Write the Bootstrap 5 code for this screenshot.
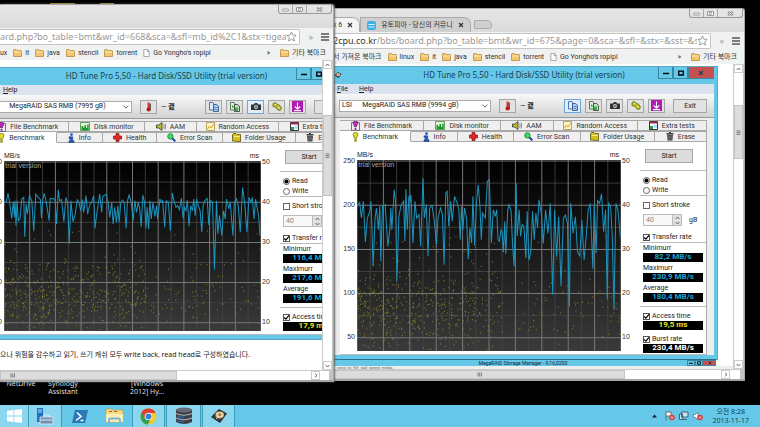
<!DOCTYPE html>
<html lang="ko">
<head>
<meta charset="utf-8">
<meta name="viewport" content="width=device-width, initial-scale=1">
<title>HD Tune Pro</title>
<link href="https://cdn.jsdelivr.net/npm/bootstrap@5.3.0/dist/css/bootstrap.min.css" rel="stylesheet">
<style>
:root{--sky:#66c8e8;--ui:Roboto,"Noto Sans CJK KR",sans-serif;--wide:"Noto Sans","Noto Sans CJK KR",sans-serif}
body{background:#000;color:#222;font:7px/10px var(--ui);height:100vh;overflow:hidden}
button,input,select{font:inherit;color:inherit;padding:0;border:0;background:none;border-radius:0}
svg{display:block;flex:none}
.desk{min-height:0;overflow:hidden}
.browser{position:absolute;display:flex;flex-direction:column;background:linear-gradient(#e6e6e6,#dadada 24px,#c4c4c4 80px);border:solid #a6a6a6;border-width:1px 1px 2px 0;border-radius:0 3px 0 0}
.b-left{left:0;right:calc(100% - 334px);top:4px;bottom:23px;z-index:2;box-shadow:1px 0 2px #666}
.b-right{left:326px;right:15px;top:8px;bottom:24px;padding-left:7px}
.capt{height:23px}
.winbtns{height:9px;border:1px solid #999;border-top:0;border-radius:0 0 3px 3px;margin-right:1px}
.winbtns button{width:14px;border-right:1px solid #aaa;display:flex;align-items:center;justify-content:center}
.winbtns button:last-child{width:24px;border:0}
.wtab{height:15px;margin-top:8px;padding:0 6px;border:1px solid #aaa;border-bottom:0;border-radius:0 7px 0 0;background:#cfcfcf;color:#333;gap:5px}
.wtab.on{background:#f3f4f4}
.wtab.blank{width:18px;height:9px;margin:11px 0 0 3px;border:1px solid #aaa;border-radius:1px 5px 3px 1px}
.urlrow{height:17px;background:#f0f1f1;padding-right:4px;font:9px/14px var(--wide);color:#999}
.urlbox{height:16px;background:#fff;border:1px solid #c4c4c4;border-left:0;border-radius:0 2px 2px 0;padding-right:2px}
.urlbox input{min-width:0;flex:1;height:13px;outline:0}
.urlbox label{color:#333}
.marks{height:15px;background:#f0f1f1;gap:6px;padding-right:7px;white-space:nowrap}
.marks a{color:#333;text-decoration:none;display:flex;align-items:center;gap:3px}
.page{flex:1;min-height:0;background:#fff;margin-right:1px}
.view{overflow:hidden;min-width:0;flex:1;display:flex;flex-direction:column}
.vbar{width:10px;flex:none;border-left:1px solid #ccc;display:flex;flex-direction:column;background:#fff}
.bbtn{width:9px;height:9px;flex:none;display:flex;align-items:center;justify-content:center;border:1px solid #ccc}
.thumb{background:#dcdcdc;border:1px solid #c4c4c4;display:flex;align-items:center;justify-content:center}
.hbar{height:10px;flex:none;border-top:1px solid #ccc;display:flex;background:#fff}
.hd{flex:none;border:solid var(--sky);border-width:0 3px 4px;background:#ededed;box-shadow:0 0 0 1px #5aa9c4}
.hd-l{width:377px;margin:8px 0 0 -22px}
.hd-r{width:386px;margin:3px 0 0 -2px}
.hdtitle{height:17px;background:var(--sky);font:8px/16px var(--wide);color:#17434f}
.hdtitle>div{padding-left:48px}
.wbtn{height:12px;width:15px;border:1px solid #3b87a0!important;border-top:0!important;display:flex;align-items:center;justify-content:center}
.wbtn.x{width:26px;background:#c75050}
.hdmenu{height:10px;background:#dde3ee;gap:11px;padding-left:3px}
.hd-l .hdmenu{padding-left:22px}
.tools{height:24px;background:linear-gradient(#f8f8f8,#d2d2d2);border-bottom:1px solid #999;padding:0 7px 0 5px}
.hd-l .tools{padding-right:4px}
.tools select.form-select{width:152px;height:12px;padding:0 12px 0 2px;border:1px solid #aaa;border-radius:0;font:7px/9px var(--ui);background-color:#fff;background-size:6px;background-position:right 2px center;color:#222}
.hd-l .tools select.form-select{width:146px}
.tb{width:17px;height:14px;border:1px solid #a6a6a6!important;background:#e2e2e2!important;display:flex;align-items:center;justify-content:center;flex:none}
.tb.hot{border-color:#6fa6d8!important;background:#dfeefa!important}
.tb.exit{width:34px}
.tabs{padding:2px 0 0;height:24px}
.tabs>div{height:11px;display:flex}
.tabs button{flex:1 1 0;min-width:0;background:#efefef;border:1px solid #a8a8a8;border-left-width:0;display:flex;align-items:center;justify-content:center;gap:4px;white-space:nowrap;color:#333}
.tabs button.on{background:#fff;border-bottom-color:#fff;border-top-color:#fff}
.w84{flex-grow:84!important}.w77{flex-grow:77!important}.w52{flex-grow:52!important}.w69{flex-grow:69!important}.w71{flex-grow:71!important}.w47{flex-grow:47!important}.w55{flex-grow:55!important}.w67{flex-grow:67!important}.w74{flex-grow:74!important}
.hd-l .body2{margin:0 5px 0 6px}.hd-r .body2{margin:0 7px 0 6px}
.sheet{background:#fff;border-right:1px solid #aaa;border-bottom:1px solid #bbb}
.hd-l .sheet{padding-bottom:2px}
.axis{width:17px;margin-top:14px;font:7px/10px "Liberation Sans",sans-serif;display:flex;flex-direction:column;color:#333}
.axis.lft{padding-right:2px;text-align:right}
.axis.rgt{padding-left:1px}
.axis span{height:var(--st);flex:none}
.hd-l{--st:40px}.hd-r{--st:44px}
.hd-l .plot{height:170px}.hd-r .plot{height:191px}
.hd-l .axis{height:170px}.hd-r .axis{height:191px}
.chart{flex:1;min-width:0}
.units{height:10px;margin-top:8px;padding-right:2px;line-height:10px;font-family:"Liberation Sans",sans-serif}
.plot{width:100%;background:linear-gradient(#000,#1b1b1b 50%,#3a3a3a)}
.panel{width:66px;flex:none;padding:7px 0 0;margin-left:2px}
.panel hr{margin:0;opacity:1;border-top:1px solid #bbb;height:0}
.start{margin:0 0 7px 5px;width:48px;height:14px;background:#dcdcdc!important;border:1px solid #a8a8a8!important;display:block}
.row10{height:10px;display:flex;align-items:center;gap:2px;margin-left:3px;white-space:nowrap}
.row10.size{gap:7px;margin-top:5px;margin-bottom:7px}
.form-check-input{width:7px;height:7px;margin:0;border:1px solid #666;flex:none;float:none;background-size:7px 7px!important;box-shadow:none}
.form-check-input[type=checkbox]{border-radius:0}
.form-check-input:checked{background-color:#fff;border-color:#555}
.form-check-input:checked[type=checkbox]{background-image:url("data:image/svg+xml,%3csvg xmlns='http://www.w3.org/2000/svg' viewBox='0 0 7 7'%3e%3cpath d='M1 3.3 2.9 5.2 6 1.4' fill='none' stroke='%23000' stroke-width='1.2'/%3e%3c/svg%3e")}
.form-check-input:checked[type=radio]{background-image:url("data:image/svg+xml,%3csvg xmlns='http://www.w3.org/2000/svg' viewBox='0 0 7 7'%3e%3ccircle cx='3.5' cy='3.5' r='2' fill='%23000'/%3e%3c/svg%3e")}
.spin{width:39px;height:12px;border:1px solid #bbb;background:#f8f8f8;color:#888;flex:none}
.spin input{width:28px;height:10px;padding-left:2px;line-height:10px;color:#888}
.spin i{width:9px;border-left:1px solid #bbb;background:#e0e0e0;display:flex;flex-direction:column;align-items:center;justify-content:space-around}
.led{height:9px;margin:0 3px 1px;background:#000;color:#19a6dc;font:bold 8px/8px Roboto,sans-serif;text-align:center;overflow:hidden;white-space:nowrap;width:60px}
.led.lime{color:#e8e428}
.post{font:7px/12px "Noto Sans","Noto Sans CJK KR",sans-serif;margin:10px 0 0;white-space:nowrap;color:#222}
.mini{height:7px;background:var(--sky);border-top:1px solid #2a6f88;font:5px/6px var(--ui);color:#123;width:383px;padding-left:26px}
.mini button{width:8px;border:1px solid #3b87a0;display:flex;align-items:center;justify-content:center}
.mini button.x{width:13px;background:#c75050}
.tiny{height:4px;font:4px/4px var(--ui);color:#666;background:#eee;overflow:hidden}
.shortcuts{position:absolute;left:0;bottom:9px;color:#ddd;font:7px/8px var(--wide);text-align:center}
.shortcuts span{width:42px}
.glint{position:absolute;left:50px;top:3px;width:64px;height:1px;background:linear-gradient(90deg,#a09428 25px,#000 25px 50px,#a09428 50px)}
.taskbar{height:22px;background:var(--sky);flex:none}
.taskbar button.app{height:22px;width:35px;display:flex;align-items:center;justify-content:center}
.taskbar button.app.s{width:33px}
.taskbar button.run{background:#8bd6ef;border:solid #3c9dbd;border-width:0 1px}
.taskbar button.stack{margin:0 1px}
.clock{font:7px/9px var(--wide);color:#123f4d;text-align:center;padding:0 11px 0 5px}
</style>
<script src="https://cdn.jsdelivr.net/npm/bootstrap@5.3.0/dist/js/bootstrap.bundle.min.js"></script>
</head>
<body class="d-flex flex-column">
<svg width="0" height="0" class="position-absolute" aria-hidden="true">
<symbol id="folder" viewBox="0 0 9 8"><path d="M.5 7.5V1.2q0-.7.7-.7h2l1 1h3.600q.7 0 .7.7v5.300z" fill="#f2c66c" stroke="#b98a3c" stroke-width=".8"/><path d="M1 3h7" stroke="#fff0c0" stroke-width=".8"/></symbol>
<symbol id="doc" viewBox="0 0 7 9"><path d="M.5.5h4L6.500 3v5.500h-6zM4.500.5V3h2" fill="#fff" stroke="#888" stroke-width=".8"/></symbol>
<symbol id="star" viewBox="0 0 12 12"><path d="M6 1l1.500 3.400 3.600.4-2.700 2.500.8 3.600L6 9.100l-3.200 1.800.8-3.600L.9 4.800l3.600-.4z" fill="#fff" stroke="#888" stroke-width=".9"/></symbol>
<symbol id="burger" viewBox="0 0 8 8"><path d="M0 1h8M0 4h8M0 7h8" stroke="#555" stroke-width="1.700"/></symbol>
<symbol id="min" viewBox="0 0 7 5"><rect x=".5" y="2" width="6" height="2" rx=".6" fill="#fff" stroke="#777" stroke-width=".7"/></symbol>
<symbol id="max" viewBox="0 0 7 5"><rect x=".5" y=".4" width="6" height="4.200" rx=".6" fill="#fff" stroke="#777" stroke-width=".8"/><rect x="2.500" y="1.700" width="2" height="1.500" fill="none" stroke="#777" stroke-width=".6"/></symbol>
<symbol id="cls" viewBox="0 0 7 5"><path d="M1 .5l5 4M6 .5l-5 4" stroke="#777" stroke-width="1.800"/><path d="M1 .5l5 4M6 .5l-5 4" stroke="#fff" stroke-width=".7"/></symbol>
<symbol id="up" viewBox="0 0 5 4"><path d="M.7 3 2.500 1l1.800 2" fill="none" stroke="#555" stroke-width=".9"/></symbol>
<symbol id="dn" viewBox="0 0 5 4"><path d="M.7 1l1.800 2L4.300 1" fill="none" stroke="#555" stroke-width=".9"/></symbol>
<symbol id="rt" viewBox="0 0 4 5"><path d="M1 .7l2 1.800L1 4.300" fill="none" stroke="#555" stroke-width=".9"/></symbol>
<symbol id="grip" viewBox="0 0 5 5"><path d="M.5 1h4M.5 2.700h4M.5 4.400h4" stroke="#666" stroke-width=".8"/></symbol>
<symbol id="gripv" viewBox="0 0 5 5"><path d="M1 .5v4M2.700.5v4M4.400.5v4" stroke="#666" stroke-width=".8"/></symbol>
<symbol id="x" viewBox="0 0 6 6"><path d="M1 1l4 4M5 1L1 5" stroke="currentColor" stroke-width="1.200"/></symbol>
<symbol id="wmin" viewBox="0 0 6 6"><path d="M0 3.500h6" stroke="#000" stroke-width="1.500"/></symbol>
<symbol id="wmax" viewBox="0 0 6 6"><path d="M.7 1.200h4.600v3.800H.7z" fill="none" stroke="#000" stroke-width="1.300"/></symbol>
<symbol id="thermo" viewBox="0 0 8 10"><path d="M5 1.500v7" stroke="#333" stroke-width="1.500"/><path d="M3.500.5v6" stroke="#e03028" stroke-width="2"/><circle cx="3.500" cy="7.600" r="2" fill="#c01818"/></symbol>
<symbol id="copy" viewBox="0 0 10 10"><path d="M.5.5H4L5 2v6H.5z" fill="#dcecff" stroke="#37598c" stroke-width=".8"/><path d="M4.500 2.500h3l2 1.800v5.200h-5z" fill="#a8cdf5" stroke="#284a80" stroke-width=".8"/><path d="M5.500 5.500h3M5.500 7.500h3" stroke="#37598c" stroke-width=".6"/></symbol>
<symbol id="copy2" viewBox="0 0 10 10"><path d="M.5.5H4L5 2v6H.5z" fill="#e0f0e0" stroke="#37603c" stroke-width=".8"/><path d="M4.500 2.500h3l2 1.800v5.200h-5z" fill="#c8dcc8" stroke="#333" stroke-width=".8"/><path d="M2 3v3l3-1v4h3V5.500H5" fill="#37b045"/></symbol>
<symbol id="cam" viewBox="0 0 10 9"><path d="M0 2.500h3l.7-1.500h2.600L7 2.500h3V8H0z" fill="#333"/><circle cx="5" cy="5" r="1.900" fill="#ddd"/><circle cx="5" cy="5" r="1" fill="#555"/></symbol>
<symbol id="gear" viewBox="0 0 10 9"><path d="M1 1.500 3.500.5l1.700 1.700 2.300.9L9.500 6 8.200 8.500 5.500 7.800 4 5.500 1 4.500z" fill="#b8b820" stroke="#6c6c10" stroke-width=".8"/><circle cx="3.200" cy="2.800" r=".8" fill="#eee"/><circle cx="6.800" cy="5.800" r=".9" fill="#eee"/></symbol>
<symbol id="save" viewBox="0 0 11 11"><path d="M0 0h11v11H0z" fill="#b01cb4"/><path d="M5.500 1.500V8M2.800 5.500l2.700 2.700 2.700-2.700M2 9.600h7" fill="none" stroke="#fff" stroke-width="1.100"/></symbol>
<symbol id="fileb" viewBox="0 0 9 10"><path d="M.5 1.500h8v8h-8z" fill="#eee" stroke="#555" stroke-width=".8"/><path d="M4.500 0q2.500 0 2.300 2.300L5.200 6H3.800L2.200 2.300Q2 0 4.500 0z" fill="#c02cc0" stroke="#501050" stroke-width=".6"/><circle cx="4.500" cy="8" r="1.100" fill="#a018a0"/></symbol>
<symbol id="bench" viewBox="0 0 7 10"><path d="M3.500.4q2.600 0 2.400 2.300L4.300 6.500H2.700L1.100 2.700Q.9.400 3.500.4z" fill="#e6de28" stroke="#66600c" stroke-width=".7"/><circle cx="3.500" cy="8.400" r="1.200" fill="#c8bc10" stroke="#66600c" stroke-width=".5"/></symbol>
<symbol id="bars" viewBox="0 0 10 9"><path d="M.5.5h9v8h-9z" fill="#e8f6d8" stroke="#484" stroke-width=".8"/><path d="M1.500 8V4H3v1.500h1.500V3H6v3h1.200V2.500h1.500V8z" fill="#149a28"/></symbol>
<symbol id="spk" viewBox="0 0 10 9"><path d="M.5 3h2.300L6 .5v8L2.800 6H.5z" fill="#c4b81c" stroke="#333" stroke-width=".8"/><path d="M7.500 2.500q1.500 2 0 4M9 1.500q1.500 3 0 6" fill="none" stroke="#555" stroke-width=".7"/></symbol>
<symbol id="rand" viewBox="0 0 9 9"><path d="M.5.500h8v8h-8z" fill="#fdf4c8" stroke="#a89040" stroke-width=".8"/><path d="M1.500 7l2-3 1.500 2 3-4" fill="none" stroke="#d8a020"/></symbol>
<symbol id="extra" viewBox="0 0 9 9"><path d="M.5.500h8v8h-8z" fill="#fff" stroke="#333"/><path d="M.5.500h8v2h-8z" fill="#9c2a4c"/><path d="M1 5h3v3H1z" fill="#29a03c"/><path d="M4.500 3.500h3.500v3.500h-3.500z" fill="#b8dcff"/></symbol>
<symbol id="info" viewBox="0 0 7 10"><circle cx="3.500" cy="1.600" r="1.400" fill="#2060c8"/><path d="M1 3.800h3.700v4H6v1.700H1V7.800h1.200V5.500H1z" fill="#1c5cc4" stroke="#0c2c68" stroke-width=".5"/></symbol>
<symbol id="health" viewBox="0 0 9 9"><path d="M3 .5h3V3h2.500v3H6v2.500H3V6H.5V3H3z" fill="#e02828" stroke="#801010" stroke-width=".7"/></symbol>
<symbol id="scan" viewBox="0 0 9 9"><path d="M5 5l3.300 3.300" stroke="#1838a8" stroke-width="1.900"/><circle cx="3.400" cy="3.400" r="2.700" fill="#40dc60" stroke="#147a30" stroke-width=".8"/></symbol>
<symbol id="usage" viewBox="0 0 9 9"><path d="M.5 8V2l1-1.500h2.500l1 1h3.500V8.500z" fill="#d8c020" stroke="#5c500c" stroke-width=".8"/><path d="M2 3.500h6" stroke="#fff6a0" stroke-width=".8"/></symbol>
<symbol id="trash" viewBox="0 0 8 9"><path d="M1 2.500h6L6.400 8.600H1.600z" fill="#444"/><path d="M.4 1.700h7.200M3 .6h2" stroke="#222"/><path d="M3 3.500v4M5 3.500v4" stroke="#aaa" stroke-width=".6"/></symbol>
<symbol id="disk" viewBox="0 0 18 16"><path d="M1 9 9 1l8 4.500L10 15z" fill="#2c2c2c"/><path d="M3 9 9 2.500l6.500 3.500L10 13z" fill="#4a4440"/><ellipse cx="9.700" cy="6.800" rx="4.200" ry="3.400" fill="#e8c898"/><circle cx="9.700" cy="6.800" r="1.200" fill="#8c6840"/><path d="M6 11l3-3" stroke="#ddd"/></symbol>
</svg>

<main class="desk position-relative flex-grow-1">
<div class="glint"></div>
<div class="shortcuts d-flex"><span>NetDrive</span><span>Synology<br>Assistant</span><span></span><span>[Windows<br>2012] Hy...</span></div>

<section class="browser b-right" aria-label="2cpu.co.kr">
 <div class="capt d-flex">
  <button class="wtab on d-flex align-items-center border-start-0 ps-0">x 6 <svg width="6" height="6"><use href="#x"/></svg></button>
  <button class="wtab d-flex align-items-center"><svg width="9" height="9" viewBox="0 0 9 9"><rect width="9" height="9" rx="2" fill="#3ab0e6"/><path d="M1.500 3.500h6M1.500 6h6" stroke="#d8f2ff"/></svg>유토피아 - 당신의 커뮤니 <svg width="6" height="6"><use href="#x"/></svg></button>
  <button class="wtab blank" aria-label="새 탭"></button>
  <div class="winbtns d-flex ms-auto"><button aria-label="최소화"><svg width="7" height="5"><use href="#min"/></svg></button><button aria-label="최대화"><svg width="7" height="5"><use href="#max"/></svg></button><button aria-label="닫기"><svg width="7" height="5"><use href="#cls"/></svg></button></div>
 </div>
 <div class="urlrow d-flex align-items-center gap-2">
  <div class="urlbox d-flex align-items-center flex-grow-1"><label for="url2">2cpu.co.kr</label><input id="url2" value="/bbs/board.php?bo_table=bmt&amp;wr_id=675&amp;page=0&amp;sca=&amp;sfl=&amp;stx=&amp;sst=&amp;sod"><svg width="11" height="11"><use href="#star"/></svg></div>
  <span>»</span><svg width="8" height="8"><use href="#burger"/></svg>
 </div>
 <nav class="marks d-flex align-items-center"><a href="#">서 가져온 북마크</a><a href="#"><svg width="9" height="8"><use href="#folder"/></svg>linux</a><a href="#"><svg width="9" height="8"><use href="#folder"/></svg>it</a><a href="#"><svg width="9" height="8"><use href="#folder"/></svg>java</a><a href="#"><svg width="9" height="8"><use href="#folder"/></svg>stencil</a><a href="#"><svg width="9" height="8"><use href="#folder"/></svg>torrent</a><a href="#"><svg width="7" height="8"><use href="#doc"/></svg>Go Yongho's ropipi</a><span class="ms-auto me-1">»</span><a href="#"><svg width="9" height="8"><use href="#folder"/></svg>기타 북마크</a></nav>
 <div class="page d-flex">
  <div class="view">
   <div class="hd hd-r">
    <div class="hdtitle d-flex"><svg width="8" height="8" class="mt-1"><use href="#disk"/></svg><div class="flex-grow-1 text-center">HD Tune Pro 5,50 - Hard Disk/SSD Utility (trial version)</div><button class="wbtn" aria-label="최소화"><svg width="6" height="6"><use href="#wmin"/></svg></button><button class="wbtn" aria-label="최대화"><svg width="6" height="6"><use href="#wmax"/></svg></button><button class="wbtn x" aria-label="닫기"><svg width="6" height="6"><use href="#x"/></svg></button></div>
    <div class="hdmenu d-flex"><span><u>F</u>ile</span><span><u>H</u>elp</span></div>
    <div class="tools d-flex align-items-center">
     <select class="form-select" aria-label="드라이브"><option>LSI &nbsp; &nbsp; &nbsp;MegaRAID SAS RMB (9994 gB)</option></select>
     <button class="tb ms-2" aria-label="온도"><svg width="8" height="10"><use href="#thermo"/></svg></button><span class="ms-1 text-nowrap">— <b>캜</b></span>
     <div class="d-flex ms-auto gap-1 me-2"><button class="tb hot" aria-label="복사"><svg width="10" height="10"><use href="#copy"/></svg></button><button class="tb" aria-label="그림 복사"><svg width="10" height="10"><use href="#copy2"/></svg></button><button class="tb" aria-label="화면"><svg width="10" height="9"><use href="#cam"/></svg></button><button class="tb" aria-label="옵션"><svg width="10" height="9"><use href="#gear"/></svg></button><button class="tb" aria-label="저장"><svg width="11" height="11"><use href="#save"/></svg></button></div>
     <button class="tb exit">Exit</button>
    </div>
    <div class="body2">
     <div class="tabs"><div><button class="w84"><svg width="9" height="10"><use href="#fileb"/></svg>File Benchmark</button><button class="w77"><svg width="10" height="9"><use href="#bars"/></svg>Disk monitor</button><button class="w52"><svg width="10" height="9"><use href="#spk"/></svg>AAM</button><button class="w84"><svg width="9" height="9"><use href="#rand"/></svg>Random Access</button><button class="w69"><svg width="9" height="9"><use href="#extra"/></svg>Extra tests</button></div>
     <div><button class="w71 on"><svg width="7" height="10"><use href="#bench"/></svg>Benchmark</button><button class="w47"><svg width="7" height="10"><use href="#info"/></svg>Info</button><button class="w55"><svg width="9" height="9"><use href="#health"/></svg>Health</button><button class="w67"><svg width="9" height="9"><use href="#scan"/></svg>Error Scan</button><button class="w74"><svg width="9" height="9"><use href="#usage"/></svg>Folder Usage</button><button class="w52"><svg width="8" height="9"><use href="#trash"/></svg>Erase</button></div></div>
     <div class="sheet d-flex">
      <div class="axis lft"><span>250</span><span>200</span><span>150</span><span>100</span><span>50</span></div>
      <div class="chart"><div class="units d-flex justify-content-between"><span>MB/s</span><span>ms</span></div><svg class="plot" data-seed="7" data-step="39.4 66.3" viewBox="0 0 788 573" preserveAspectRatio="none" data-wave="0,139 8,127 13,174 19,124 25,246 31,174 38,154 42,124 48,319 54,174 58,144 64,209 68,139 71,304 76,139 84,134 92,259 98,209 101,144 104,209 111,89 115,124 119,364 125,169 132,134 139,124 143,244 146,87 150,209 155,107 159,124 161,104 167,249 173,124 178,174 185,164 190,259 197,54 201,174 207,134 212,289 217,144 224,137 231,184 237,254 242,174 249,144 255,164 260,314 265,99 269,94 274,199 280,124 284,184 291,109 299,129 304,149 308,239 312,139 316,209 321,144 327,174 332,297 337,204 342,249 346,109 351,257 357,124 362,74 367,139 371,239 375,159 383,174 389,64 395,59 401,249 407,149 413,169 417,149 421,239 425,244 430,209 433,214 437,277 441,184 444,281 450,149 454,134 460,154 464,249 469,319 475,69 478,229 484,149 488,229 493,194 498,199 504,294 508,154 513,301 519,274 524,154 529,239 534,159 539,204 543,119 550,160 556,250 563,150 570,220 577,130 584,404 590,150 596,290 602,170 609,379 616,175 622,165 628,190 634,440 638,129 645,220 652,170 658,275 665,288 671,180 678,300 684,230 690,150 696,130 704,326 708,130 714,280 718,122 724,130 730,101 736,215 742,150 747,419 751,130 757,140 762,230 767,450 773,130 779,150 786,230"><text x="4" y="20" font-size="21" fill="#aaa" font-family="Liberation Sans">trial version</text></svg></div>
      <div class="axis rgt"><span>50</span><span>40</span><span>30</span><span>20</span><span>10</span></div>
      <div class="panel">
       <button class="start">Start</button><hr>
       <div class="row10 mt-1"><input class="form-check-input" type="radio" name="m2" id="r2" checked><label for="r2">Read</label></div>
       <div class="row10"><input class="form-check-input" type="radio" name="m2" id="w2"><label for="w2">Write</label></div><hr>
       <div class="row10 mt-1"><input class="form-check-input" type="checkbox" id="s2"><label for="s2">Short stroke</label></div>
       <div class="row10 size"><div class="spin d-flex"><input value="40" aria-label="크기" disabled><i><svg width="5" height="4"><use href="#up"/></svg><svg width="5" height="4"><use href="#dn"/></svg></i></div><span>gB</span></div>
       <div class="row10"><input class="form-check-input" type="checkbox" id="t2" checked><label for="t2">Transfer rate</label></div><hr>
       <div class="row10">Minimurr</div><div class="led">82,2 MB/s</div><div class="row10">Maximurr</div><div class="led">230,9 MB/s</div><div class="row10">Average</div><div class="led">180,4 MB/s</div>
       <hr class="mt-1"><div class="row10 mt-1"><input class="form-check-input" type="checkbox" id="a2" checked><label for="a2">Access time</label></div><div class="led lime">19,5 ms</div>
       <div class="row10 mt-1"><input class="form-check-input" type="checkbox" id="b2" checked><label for="b2">Burst rate</label></div><div class="led text-white">230,4 MB/s</div>
      </div>
     </div>
    </div>
   </div>
   <div class="mini d-flex flex-shrink-0"><span class="flex-grow-1 text-center">MegaRAID Storage Manager - 9,16,0200</span><button aria-label="최소화"><svg width="4" height="4"><use href="#wmin"/></svg></button><button aria-label="최대화"><svg width="4" height="4"><use href="#wmax"/></svg></button><button class="x" aria-label="닫기"><svg width="4" height="4"><use href="#x"/></svg></button></div>
   <div class="tiny ps-1">www, lsi, file, raid, speed, media</div>
  </div>
  <div class="vbar"><button class="bbtn" aria-label="위로"><svg width="5" height="4"><use href="#up"/></svg></button><div style="height:32px"></div><div class="thumb" style="height:54px"><svg width="5" height="5"><use href="#grip"/></svg></div><button class="bbtn mt-auto" aria-label="아래로"><svg width="5" height="4"><use href="#dn"/></svg></button></div>
 </div>
 <div class="hbar me-1"><div class="thumb flex-grow-1"><svg width="5" height="5"><use href="#gripv"/></svg></div><div style="width:96px"></div><button class="bbtn" aria-label="오른쪽"><svg width="4" height="5"><use href="#rt"/></svg></button><div style="width:10px"></div></div>
</section>

<section class="browser b-left" aria-label="2cpu.co.kr">
 <div class="capt d-flex justify-content-end"><div class="winbtns d-flex"><button aria-label="최소화"><svg width="7" height="5"><use href="#min"/></svg></button><button aria-label="최대화"><svg width="7" height="5"><use href="#max"/></svg></button><button aria-label="닫기"><svg width="7" height="5"><use href="#cls"/></svg></button></div></div>
 <div class="urlrow d-flex align-items-center gap-2">
  <div class="urlbox d-flex align-items-center flex-grow-1"><input aria-label="주소" value="ard.php?bo_table=bmt&amp;wr_id=668&amp;sca=&amp;sfl=mb_id%2C1&amp;stx=tigea99"><svg width="11" height="11"><use href="#star"/></svg></div>
  <span>»</span><svg width="8" height="8"><use href="#burger"/></svg>
 </div>
 <nav class="marks d-flex align-items-center"><a href="#">ux</a><a href="#"><svg width="9" height="8"><use href="#folder"/></svg>it</a><a href="#"><svg width="9" height="8"><use href="#folder"/></svg>java</a><a href="#"><svg width="9" height="8"><use href="#folder"/></svg>stencil</a><a href="#"><svg width="9" height="8"><use href="#folder"/></svg>torrent</a><a href="#"><svg width="7" height="8"><use href="#doc"/></svg>Go Yongho's ropipi</a><span class="ms-auto me-1">»</span><a href="#"><svg width="9" height="8"><use href="#folder"/></svg>기타 북마크</a></nav>
 <div class="page d-flex">
  <div class="view">
   <div class="hd hd-l">
    <div class="hdtitle d-flex"><svg width="8" height="8" class="mt-1"><use href="#disk"/></svg><div class="flex-grow-1 text-center">HD Tune Pro 5,50 - Hard Disk/SSD Utility (trial version)</div><button class="wbtn" aria-label="최소화"><svg width="6" height="6"><use href="#wmin"/></svg></button><button class="wbtn" aria-label="최대화"><svg width="6" height="6"><use href="#wmax"/></svg></button><button class="wbtn x" aria-label="닫기"><svg width="6" height="6"><use href="#x"/></svg></button></div>
    <div class="hdmenu d-flex"><span><u>H</u>elp</span></div>
    <div class="tools d-flex align-items-center">
     <select class="form-select" aria-label="드라이브"><option>LSI &nbsp; &nbsp; &nbsp;MegaRAID SAS RMB (7995 gB)</option></select>
     <button class="tb ms-2" aria-label="온도"><svg width="8" height="10"><use href="#thermo"/></svg></button><span class="ms-1 text-nowrap">— <b>캜</b></span>
     <div class="d-flex ms-auto gap-1 me-2"><button class="tb" aria-label="복사"><svg width="10" height="10"><use href="#copy"/></svg></button><button class="tb" aria-label="그림 복사"><svg width="10" height="10"><use href="#copy2"/></svg></button><button class="tb hot" aria-label="화면"><svg width="10" height="9"><use href="#cam"/></svg></button><button class="tb" aria-label="옵션"><svg width="10" height="9"><use href="#gear"/></svg></button><button class="tb" aria-label="저장"><svg width="11" height="11"><use href="#save"/></svg></button></div>
     <button class="tb exit" aria-label="Exit"></button>
    </div>
    <div class="body2">
     <div class="tabs"><div><button class="w84"><svg width="9" height="10"><use href="#fileb"/></svg>File Benchmark</button><button class="w77"><svg width="10" height="9"><use href="#bars"/></svg>Disk monitor</button><button class="w52"><svg width="10" height="9"><use href="#spk"/></svg>AAM</button><button class="w84"><svg width="9" height="9"><use href="#rand"/></svg>Random Access</button><button class="w69"><svg width="9" height="9"><use href="#extra"/></svg>Extra tests</button></div>
     <div><button class="w71 on"><svg width="7" height="10"><use href="#bench"/></svg>Benchmark</button><button class="w47"><svg width="7" height="10"><use href="#info"/></svg>Info</button><button class="w55"><svg width="9" height="9"><use href="#health"/></svg>Health</button><button class="w67"><svg width="9" height="9"><use href="#scan"/></svg>Error Scan</button><button class="w74"><svg width="9" height="9"><use href="#usage"/></svg>Folder Usage</button><button class="w52"><svg width="8" height="9"><use href="#trash"/></svg>Erase</button></div></div>
     <div class="sheet d-flex">
      <div class="axis lft"><span>250</span><span>200</span><span>150</span><span>100</span><span>50</span></div>
      <div class="chart"><div class="units d-flex justify-content-between"><span>MB/s</span><span>ms</span></div><svg class="plot" data-seed="3" data-step="38.400 60.300" viewBox="0 0 768 510" preserveAspectRatio="none" data-wave="0,124 7,122 12,97 17,124 23,172 28,122 31,169 33,119 36,194 39,119 43,179 48,172 53,114 59,109 62,227 66,129 70,159 76,104 83,119 89,211 95,99 102,109 109,116 112,172 116,116 120,97 125,116 135,179 138,112 144,114 149,112 153,120 157,189 162,86 166,119 172,116 179,182 185,109 190,124 195,249 200,119 206,182 213,159 219,116 224,124 229,149 234,116 238,154 245,104 250,159 256,132 262,124 268,104 272,202 277,159 286,99 292,154 295,106 305,100 311,124 316,169 322,124 326,189 331,139 336,184 340,134 344,184 349,124 354,117 359,124 365,202 369,119 374,102 380,124 386,179 391,119 396,154 401,124 405,139 410,197 415,102 420,124 424,202 428,139 432,204 436,119 440,174 445,124 451,166 456,134 459,174 466,114 470,124 474,119 480,199 485,119 491,124 497,209 503,96 509,124 514,139 519,134 524,146 530,112 535,172 539,139 544,149 548,117 553,196 558,134 563,149 567,114 571,164 576,114 582,139 586,149 591,214 595,134 600,119 607,112 612,192 617,119 623,124 629,326 635,119 639,219 644,164 651,224 656,149 661,174 665,114 672,144 676,122 684,224 688,124 695,114 700,134 706,214 713,79 719,124 726,214 732,109 738,124 742,109 747,174 752,114 757,144 761,164 765,224"><text x="4" y="20" font-size="21" fill="#aaa" font-family="Liberation Sans">trial version</text></svg></div>
      <div class="axis rgt"><span>50</span><span>40</span><span>30</span><span>20</span><span>10</span></div>
      <div class="panel">
       <button class="start">Start</button><hr>
       <div class="row10 mt-1"><input class="form-check-input" type="radio" name="m1" id="r1" checked><label for="r1">Read</label></div>
       <div class="row10"><input class="form-check-input" type="radio" name="m1" id="w1"><label for="w1">Write</label></div><hr>
       <div class="row10 mt-1"><input class="form-check-input" type="checkbox" id="s1"><label for="s1">Short stroke</label></div>
       <div class="row10 size"><div class="spin d-flex"><input value="40" aria-label="크기" disabled><i><svg width="5" height="4"><use href="#up"/></svg><svg width="5" height="4"><use href="#dn"/></svg></i></div></div>
       <div class="row10"><input class="form-check-input" type="checkbox" id="t1" checked><label for="t1">Transfer rate</label></div><hr>
       <div class="row10">Minimurr</div><div class="led">116,4 MB/s</div><div class="row10">Maximurr</div><div class="led">217,6 MB/s</div><div class="row10">Average</div><div class="led">191,6 MB/s</div>
       <hr class="mt-1"><div class="row10 mt-1"><input class="form-check-input" type="checkbox" id="a1" checked><label for="a1">Access time</label></div><div class="led lime">17,9 ms</div>
      </div>
     </div>
    </div>
   </div>
   <p class="post">으나 위험을 감수하고 읽기, 쓰기 캐쉬 모두 write back, read head로 구성하였습니다.</p>
  </div>
  <div class="vbar"><button class="bbtn" aria-label="위로"><svg width="5" height="4"><use href="#up"/></svg></button><div style="height:46px"></div><div class="thumb" style="height:81px"><svg width="5" height="5"><use href="#grip"/></svg></div><button class="bbtn mt-auto" aria-label="아래로"><svg width="5" height="4"><use href="#dn"/></svg></button></div>
 </div>
 <div class="hbar me-1"><div class="thumb" style="width:177px;padding-right:153px"><svg width="5" height="5"><use href="#gripv"/></svg></div><button class="bbtn ms-auto" aria-label="오른쪽"><svg width="4" height="5"><use href="#rt"/></svg></button><div style="width:9px"></div></div>
</section>
</main>

<footer class="taskbar d-flex align-items-center">
 <button class="app run border-start-0 s" aria-label="시작" style="width:29px"><svg width="15" height="14" viewBox="0 0 15 14"><path d="M0 2l6.500-1v5.600H0zM7.300.9 15 0v6.600H7.300zM0 7.400h6.500V13L0 12zM7.300 7.400H15V14l-7.700-1z" fill="#fff"/></svg></button>
 <button class="app run border-start-0 s" aria-label="서버 관리자"><svg width="18" height="17" viewBox="0 0 18 17"><path d="M1 0h6v14H1z" fill="#1d6fc0"/><path d="M2 2h4M2 4h4" stroke="#bfe0ff"/><path d="M4 9h13v7H4z" fill="#7592b0" stroke="#dfeaf4" stroke-width=".8"/><path d="M8 9V7h5v2M4 12h13" fill="none" stroke="#dfeaf4"/></svg></button>
 <button class="app" aria-label="PowerShell"><svg width="16" height="13" viewBox="0 0 16 13"><path d="M3 0h13l-3 13H0z" fill="#2a78b8"/><path d="M5 2.500l4 4-5 4M8.500 10.500h3" fill="none" stroke="#fff" stroke-width="1.600"/></svg></button>
 <button class="app" aria-label="탐색기"><svg width="19" height="16" viewBox="0 0 19 16"><path d="M1 14V2l1-1h4l1 1h10l1 1v11z" fill="#f4dc86" stroke="#c9a548" stroke-width=".8"/><path d="M4 3.500h3M9 3.500h3" stroke="#c44" stroke-width="1.200"/><path d="M1 6h17v8H1z" fill="#fbeeb2"/><path d="M4 15.500V12q0-1.500 1.500-1.500h8q1.500 0 1.500 1.500v3.500" fill="none" stroke="#79b6dc" stroke-width="1.800"/></svg></button>
 <button class="app run s" aria-label="Chrome"><svg width="17" height="17" viewBox="0 0 17 17"><circle cx="8.500" cy="8.500" r="8" fill="#f5c922"/><path d="M8.500 8.500 1.600 4.500A8 8 0 0 1 15.500 4.700H8.500z" fill="#dc4030"/><path d="M1.600 4.500A8 8 0 0 0 7.800 16.500L11.300 10 8.500 8.500 5.500 10z" fill="#2fa04c"/><path d="M1.600 4.500l3.700 6 3-2-1-3.500h8.200A8 8 0 0 0 1.600 4.500z" fill="#dc4030"/><circle cx="8.500" cy="8.500" r="3.800" fill="#fff"/><circle cx="8.500" cy="8.500" r="3" fill="#3f7fd8"/></svg></button>
 <button class="app run stack" aria-label="스토리지"><svg width="18" height="18" viewBox="0 0 18 18"><path d="M1 3v12q8 4 16 0V3z" fill="#3c4046"/><ellipse cx="9" cy="3" rx="8" ry="2.500" fill="#656b74"/><path d="M1 6.500q8 3.500 16 0M1 11q8 3.500 16 0" fill="none" stroke="#aab4c0" stroke-width="1.200"/><path d="M2 9q3 1.300 7 1.300M2 13.500q3 1.300 7 1.300" fill="none" stroke="#1878d0"/></svg></button>
 <button class="app run s" aria-label="HD Tune"><svg width="18" height="16"><use href="#disk"/></svg></button>
 <div class="d-flex align-items-center ms-auto gap-1">
  <svg width="5" height="4" viewBox="0 0 5 4" class="me-1"><path d="M0 3.500 2.500.5 5 3.500z" fill="#123"/></svg>
  <svg width="10" height="10" viewBox="0 0 10 10"><path d="M1 .5v9M1 1h5v4H1" fill="#fff" stroke="#555" stroke-width=".8"/><circle cx="7" cy="6.500" r="2.800" fill="#d83a3a"/><path d="M6 5.500l2 2M8 5.500l-2 2" stroke="#fff" stroke-width=".8"/></svg>
  <svg width="10" height="10" viewBox="0 0 10 10"><path d="M2.500 1h6.500v5H2.500zM.5 3h3v5.500h-3zM4 8.500h4" fill="#bfe4f4" stroke="#345" stroke-width=".8"/></svg>
  <svg width="10" height="10" viewBox="0 0 10 10"><path d="M.5 3.500h2L5 1v8L2.500 6.500h-2z" fill="#fff" stroke="#666" stroke-width=".7"/><circle cx="7" cy="6.500" r="2.800" fill="#d83a3a"/><path d="M6 5.500l2 2M8 5.500l-2 2" stroke="#fff" stroke-width=".8"/></svg>
  <div class="clock">오전 8:28<br>2013-11-17</div>
 </div>
</footer>
<script>
// Draws the grid, the access-time dots and the transfer-rate line of each benchmark plot.
document.querySelectorAll('.plot').forEach(function (p) {
  var box = p.viewBox.baseVal, W = box.width, H = box.height;
  var step = p.dataset.step.split(' ').map(Number), s = +p.dataset.seed;
  function rnd() { s = (s * 16807 + 11) % 2147483647; return s / 2147483647; }
  for (var k = 0; k < 9; k++) rnd();
  function add(d, stroke, w) {
    var e = document.createElementNS('http://www.w3.org/2000/svg', 'path');
    e.setAttribute('d', d); e.setAttribute('fill', 'none');
    e.setAttribute('stroke', stroke); e.setAttribute('stroke-width', w);
    p.appendChild(e);
  }
  var minor = '', major = '', i;
  for (i = 0; i * step[0] <= W + 1; i++) { var v = 'M' + i * step[0] + ' 0V' + H; if (i % 2) minor += v; else major += v; }
  for (i = 0; i * step[1] < H; i++) { var h = 'M0 ' + (i * step[1] + 3) + 'H' + W; if (i % 2) minor += h; else major += h; }
  add(minor, '#444', 2.5); add(major, '#777', 3);
  var dots = '';
  for (i = 0; i < 800; i++) {
    var x = Math.pow(rnd(), 1.15) * W, y = H * (0.79 + (rnd() + rnd() - 1) * 0.22);
    if (x > W * 0.55 && rnd() < 0.72) continue;
    if (rnd() < 0.08) y = H * (0.4 + rnd() * 0.3);
    dots += 'M' + x.toFixed(0) + ' ' + y.toFixed(0) + 'h3';
  }
  add(dots, '#8c8a2a', 3);
  add('M' + p.dataset.wave.replace(/ /g, 'L'), '#1c93bd', 3);
});
</script>
</body>
</html>
